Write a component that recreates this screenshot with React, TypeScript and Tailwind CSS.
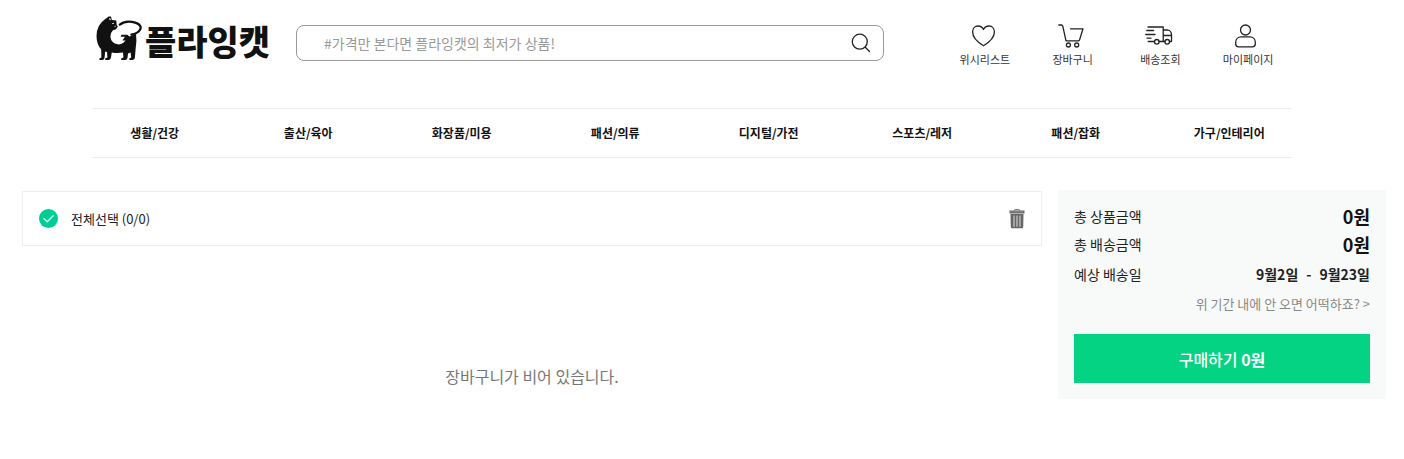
import type { ReactNode } from "react";

const categories = [
  "생활/건강",
  "출산/육아",
  "화장품/미용",
  "패션/의류",
  "디지털/가전",
  "스포츠/레저",
  "패션/잡화",
  "가구/인테리어",
];

function LineIcon({ children }: { children: ReactNode }) {
  return (
    <svg
      aria-hidden="true"
      viewBox="0 0 28 24"
      className="h-6 w-7 overflow-visible fill-none stroke-[#222] stroke-[1.3]"
      strokeLinecap="round"
      strokeLinejoin="round"
    >
      {children}
    </svg>
  );
}

const shortcuts = [
  {
    label: "위시리스트",
    icon: (
      <LineIcon>
        <path d="M12.5 21.8C8.5 19.4 1.6 14 1.6 7.8C1.6 4.3 4 2 6.9 2C9.5 2 11.5 3.3 12.5 5.6C13.5 3.3 15.5 2 18.1 2C21 2 23.4 4.3 23.4 7.8C23.4 14 16.5 19.4 12.5 21.8Z" />
      </LineIcon>
    ),
  },
  {
    label: "장바구니",
    icon: (
      <LineIcon>
        <path d="M-.2 1H2.4Q3.5 1 3.8 2.1L7 16.8H19.2Q20.2 16.8 20.6 15.7L24 4.8H11.5" />
        <circle cx="9.4" cy="21" r="2" />
        <circle cx="17.7" cy="21" r="2" />
      </LineIcon>
    ),
  },
  {
    label: "배송조회",
    icon: (
      <LineIcon>
        <path d="M2 3H17.2V17.5H13.2M17.2 6H22Q25.5 7 25.5 11V17.5H23.5M17.2 11.5H25.5M19 17.5H17.2M8.5 17.5H2.2M.8 6.5H7.5M-.2 10.5H9M1 14.2H5" />
        <circle cx="10.8" cy="17.8" r="2.3" />
        <circle cx="21.2" cy="17.8" r="2.3" />
      </LineIcon>
    ),
  },
  {
    label: "마이페이지",
    icon: (
      <LineIcon>
        <circle cx="11.5" cy="6" r="5" />
        <path d="M1.7 20V18.5C1.7 15 4 12.8 7 12.8H16C19 12.8 21.3 15 21.3 18.5V20C21.3 21.8 20.3 22.8 18.5 22.8H4.5C2.7 22.8 1.7 21.8 1.7 20Z" />
      </LineIcon>
    ),
  },
];

function CatMark() {
  return (
    <svg aria-hidden="true" viewBox="0 0 46 46" className="h-[46px] w-[46px] shrink-0">
      <path
        fill="#111"
        d="M9 4.2L12.6 1.5L15 1.6L15.8 5L20.3 5.6L20.6 9.5L21.8 11.6L20 14.2L17 15.2Q14.2 17.8 14.4 21.6Q14.8 26.4 18.8 28.6Q23.4 30.6 27.4 27.8L29.6 25.4H26.4L29 21.8H24.6L25.4 19.8H31.4L33.4 21.6L40 18.8Q41 26 39.7 33L38.9 42.6Q38.7 45 36.6 45H33.4V43.4L35.2 42.4L34.6 37.4L32 38.6L31.5 42.8Q31.2 45 29 45H25.2V43.4L27.4 42.4L27 37.6Q21 38.4 15.8 37.4L14.9 42.8Q14.5 45 12.4 45H9.2V43.4L11.4 42.4L11 37L9.2 36.4L8.5 43Q8.2 45 6.2 45H3.4V43.4L5.4 42.4L5.2 34.4Q.6 29.4.5 21Q.6 9.8 9 4.2Z"
      />
      <path
        d="M23.8 9.6C27.5 6.8 34 6.2 39.2 7.6C44.4 9 46 12.6 43.4 15.6Q41 18.6 35.4 19.6"
        fill="none"
        stroke="#111"
        strokeWidth="2.3"
        strokeLinecap="round"
      />
      <path
        d="M13 4.2L14 3.5L14.4 5.2M16.2 8.6L18 8.2M19.4 10.8L18.9 12"
        stroke="#fff"
        strokeWidth=".9"
        fill="none"
      />
    </svg>
  );
}

function TrashIcon() {
  return (
    <svg aria-hidden="true" viewBox="0 0 16 20" className="h-5 w-4">
      <path d="M5.5 2V1.2Q5.5.5 6.2.5H9.8Q10.5.5 10.5 1.2V2" fill="none" stroke="#777" />
      <path d="M.5 1.6H15.5V4.4H.5ZM1.5 4.9H14.5L14.2 18Q14.1 19.3 12.8 19.3H3.2Q1.9 19.3 1.8 18Z" fill="#666" />
      <path d="M5 6.5V17.8M8 6.5V17.8M11 6.5V17.8" stroke="#ccc" strokeWidth="1.2" />
      <path d="M1.5 2.9H14.5" stroke="#999" strokeWidth=".7" />
    </svg>
  );
}

function Header() {
  return (
    <header className="pr-5">
      <div className="mx-auto max-w-[1200px]">
        <div className="flex h-[108px] items-start">
          <a href="#" className="ml-1 flex w-[200px] shrink-0 items-start gap-[3px] pt-[15px]">
            <CatMark />
            <span className="whitespace-nowrap text-[34px] leading-[52px] font-black text-[#111]">
              플라잉캣
            </span>
          </a>
          <form
            role="search"
            className="mt-[25px] flex h-9 min-w-0 flex-1 items-center rounded-lg border border-[#999] pr-3 pl-[27px]"
          >
            <input
              type="search"
              aria-label="상품 검색"
              placeholder="#가격만 본다면 플라잉캣의 최저가 상품!"
              className="min-w-0 flex-1 bg-transparent text-sm outline-none placeholder:text-[#999]"
            />
            <button type="button" aria-label="검색">
              <svg
                aria-hidden="true"
                viewBox="0 0 20 20"
                className="h-5 w-5 fill-none stroke-[#222] stroke-[1.3]"
                strokeLinecap="round"
              >
                <circle cx="8.8" cy="8.7" r="7.5" />
                <path d="M14.3 14.2L18.5 18.5" />
              </svg>
            </button>
          </form>
          <nav aria-label="바로가기" className="ml-[57px] grid w-[351px] shrink-0 grid-cols-4 pt-6">
            {shortcuts.map((item) => (
              <a
                key={item.label}
                href="#"
                className="flex flex-col items-center gap-[3px] text-[11px] leading-4 text-[#333]"
              >
                {item.icon}
                {item.label}
              </a>
            ))}
          </nav>
        </div>
        <nav aria-label="카테고리" className="border-y border-[#eee]">
          <div className="-mx-3.5 grid grid-cols-8">
            {categories.map((name) => (
              <a
                key={name}
                href="#"
                className="text-center text-xs leading-[48px] font-bold text-[#111]"
              >
                {name}
              </a>
            ))}
          </div>
        </nav>
      </div>
    </header>
  );
}

function CartList() {
  return (
    <section className="min-w-0 flex-1 pt-px">
      <div className="flex h-[55px] items-center justify-between border border-[#eee] px-4">
        <label className="flex cursor-pointer items-center gap-3 text-[13px] text-[#222]">
          <input type="checkbox" defaultChecked className="peer sr-only" />
          <svg
            aria-hidden="true"
            viewBox="0 0 20 20"
            className="h-5 w-5 fill-[#bbb] peer-checked:fill-[#00cc96]"
          >
            <circle cx="9.5" cy="9.5" r="9.5" />
            <path
              d="M5 9.7L8.3 12.8L14.2 6.8"
              fill="none"
              stroke="#c8fff0"
              strokeWidth="1.5"
              strokeLinecap="round"
              strokeLinejoin="round"
            />
          </svg>
          <span>전체선택 (0/0)</span>
        </label>
        <button type="button" aria-label="선택 삭제">
          <TrashIcon />
        </button>
      </div>
      <p className="pt-[118px] text-center text-base text-[#777]">장바구니가 비어 있습니다.</p>
    </section>
  );
}

function Summary() {
  return (
    <aside className="w-[328px] shrink-0 bg-[#f8faf9] px-4 pt-[15px] pb-4 text-sm text-[#222]">
      <dl>
        <div className="flex h-[22px] items-center justify-between">
          <dt>총 상품금액</dt>
          <dd className="text-lg font-bold text-[#111]">0원</dd>
        </div>
        <div className="mt-1.5 flex h-[22px] items-center justify-between">
          <dt>총 배송금액</dt>
          <dd className="text-lg font-bold text-[#111]">0원</dd>
        </div>
        <div className="mt-2 flex h-[22px] items-center justify-between">
          <dt>예상 배송일</dt>
          <dd className="flex gap-2 font-bold">
            <span>9월2일</span>
            <span>-</span>
            <span>9월23일</span>
          </dd>
        </div>
      </dl>
      <a href="#" className="mt-2 block text-right text-[13px] leading-[22px] text-[#888]">
        위 기간 내에 안 오면 어떡하죠? &gt;
      </a>
      <button
        type="button"
        className="mt-[19px] h-[49px] w-full bg-[#03d383] text-base font-medium text-white"
      >
        구매하기 <strong className="font-bold">0원</strong>
      </button>
    </aside>
  );
}

export default function App() {
  return (
    <div className="min-h-screen bg-white font-['Noto_Sans_CJK_KR',sans-serif]">
      <Header />
      <main className="flex items-start gap-4 pt-8 pr-[18px] pl-[22px]">
        <CartList />
        <Summary />
      </main>
    </div>
  );
}
